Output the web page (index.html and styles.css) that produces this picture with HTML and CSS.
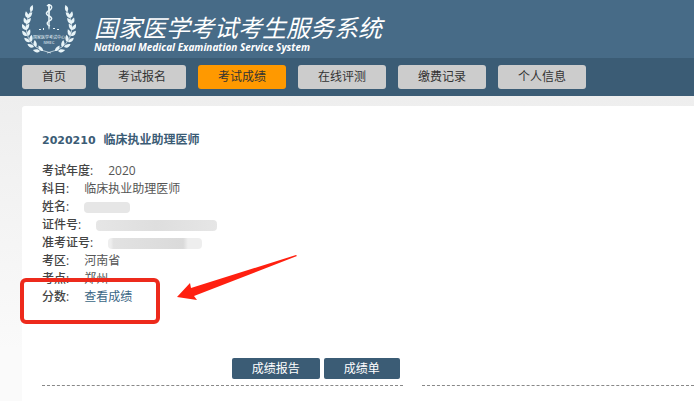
FILE: index.html
```html
<!DOCTYPE html>
<html lang="zh-CN">
<head>
<meta charset="utf-8">
<meta name="viewport" content="width=device-width, initial-scale=1">
<title>国家医学考试考生服务系统</title>
<link rel="stylesheet" href="styles.css">
</head>
<body>
<header class="header">
  <svg class="logo" viewBox="0 0 54 54" aria-hidden="true">
    <defs>
      <path id="leaf" d="M0 0C-3.500-1-4-3-3-6.500C-.4-4.600 1-2.500 0 0Z"/>
      <g id="branch">
        <path d="M9 10C2 22 2 37 14 46Q20 50 29 52" fill="none" stroke="currentColor" stroke-width=".7"/>
        <use href="#leaf" transform="translate(9 11) rotate(38)"/>
        <use href="#leaf" transform="translate(6 17) rotate(8)"/>
        <use href="#leaf" transform="translate(5 23)"/>
        <use href="#leaf" transform="translate(4 29) rotate(-8)"/>
        <use href="#leaf" transform="translate(5 35) rotate(-18)"/>
        <use href="#leaf" transform="translate(8 41) rotate(-30)"/>
        <use href="#leaf" transform="translate(12 46) rotate(-42)"/>
        <use href="#leaf" transform="translate(18 50) rotate(-58)"/>
        <use href="#leaf" transform="translate(6 17) rotate(62)"/>
        <use href="#leaf" transform="translate(5 23) rotate(58)"/>
        <use href="#leaf" transform="translate(4 29) rotate(52)"/>
        <use href="#leaf" transform="translate(6 35) rotate(42)"/>
        <use href="#leaf" transform="translate(9 41) rotate(30)"/>
        <use href="#leaf" transform="translate(14 46) rotate(15)"/>
        <use href="#leaf" transform="translate(21 50) rotate(-15)"/>
      </g>
    </defs>
    <g fill="currentColor">
      <use href="#branch"/>
      <use href="#branch" transform="translate(54 0) scale(-1 1)"/>
      <path d="M26 3h2l-.4 24-.6 2-.6-2Z"/>
      <path d="M25 5C28 2 32 6 28 9C24 11 23 13 27 15C31 17 30 19 27 20C24 22 25 24 28 25" fill="none" stroke="currentColor" stroke-width="1.500"/>
      <text x="27" y="38" class="logo-text">国家医学考试中心</text>
      <text x="27" y="43" class="logo-text">NMEC</text>
      <path d="M17 28h2v1h-2zM21 27h1v2h-1zM31 27h2v1h-2zM35 28h2v1h-2z"/>
    </g>
  </svg>
  <div class="brand">
    <h1 class="title">国家医学考试考生服务系统</h1>
    <p class="subtitle">National Medical Examination Service System</p>
  </div>
</header>
<nav class="nav">
  <a href="#">首页</a>
  <a href="#">考试报名</a>
  <a href="#" class="active" aria-current="page">考试成绩</a>
  <a href="#">在线评测</a>
  <a href="#">缴费记录</a>
  <a href="#">个人信息</a>
</nav>
<main class="panel">
  <section class="result">
    <h2 class="exam"><span class="code">2020210</span>临床执业助理医师</h2>
    <dl class="details">
      <div class="row"><dt>考试年度:</dt><dd>2020</dd></div>
      <div class="row"><dt>科目:</dt><dd>临床执业助理医师</dd></div>
      <div class="row"><dt>姓名:</dt><dd><span class="mask mask-name"></span></dd></div>
      <div class="row"><dt>证件号:</dt><dd><span class="mask mask-id"></span></dd></div>
      <div class="row"><dt>准考证号:</dt><dd><span class="mask mask-ticket"></span></dd></div>
      <div class="row"><dt>考区:</dt><dd>河南省</dd></div>
      <div class="row"><dt>考点:</dt><dd>郑州</dd></div>
      <div class="row score"><dt>分数:</dt><dd><a href="#">查看成绩</a></dd>
        <svg class="callout" viewBox="0 0 280 74" aria-hidden="true">
          <rect x="4" y="28" width="136" height="42" rx="4" fill="none" stroke="#ed2a1c" stroke-width="4"/>
          <path d="M159 45L172 31L173 36L278 3L279 4L176 44L179 48Z" fill="#ff2010"/>
        </svg>
      </div>
    </dl>
    <div class="actions">
      <button type="button">成绩报告</button>
      <button type="button">成绩单</button>
    </div>
  </section>
  <section class="result"></section>
</main>
</body>
</html>
```
FILE: styles.css
```css
* { box-sizing: border-box; }

body {
  margin: 0;
  min-height: 100vh;
  display: flex;
  flex-direction: column;
  background: linear-gradient(#eeeeee 96px, #fafafa 350px);
  color: #555;
  font: 12px/18px "Open Sans", "Noto Sans CJK SC", sans-serif;
}

.header {
  display: flex;
  align-items: flex-start;
  gap: 18px;
  height: 58px;
  padding: 1px 22px 0;
  background: #476b87;
  color: #fff;
}

.logo {
  flex: none;
  width: 54px;
  height: 54px;
  color: #e8f4f8;
}

.logo-text {
  font: 4px "Noto Sans CJK SC", sans-serif;
  text-anchor: middle;
}

.brand { padding-top: 12px; }

.title {
  margin: 0;
  font: italic 400 24px/28px "Noto Sans CJK SC", sans-serif;
  white-space: nowrap;
}

.subtitle {
  margin: 0;
  font: italic 700 10px/12px "Noto Sans", sans-serif;
  white-space: nowrap;
}

.nav {
  display: flex;
  gap: 12px;
  padding: 7px 22px;
  background: #3b5c75;
}

.nav a {
  padding: 0 20px;
  border-radius: 3px;
  background: #ccc;
  color: #333;
  line-height: 24px;
  text-decoration: none;
  white-space: nowrap;
}

.nav .active { background: #ff9900; }

.panel {
  flex: 1;
  display: grid;
  grid-template-columns: 57fr 43fr;
  align-items: stretch;
  align-content: start;
  gap: 19px;
  margin: 10px 0 0 22px;
  padding: 25px 0 0 20px;
  border-top-left-radius: 3px;
  background: #fff;
}

.result {
  padding-bottom: 6px;
  border-bottom: 1px dashed #888;
}

.exam {
  margin: 0 0 12px;
  color: #3b5c75;
  font-size: 12px;
  line-height: 18px;
}

.code {
  margin-right: 8px;
  font: bold 11px/18px "DejaVu Sans", sans-serif;
}

.details { margin: 0; }

.row {
  display: flex;
  gap: 15px;
}

dt { font-weight: 500; color: #444; }

dd { margin: 0; }

.mask {
  display: block;
  height: 11px;
  margin-top: 4px;
  border-radius: 4px;
  background: #e6e6e6;
}

.mask-name { width: 46px; }

.mask-id { width: 121px; background: linear-gradient(90deg, #e6e6e6, #dedede 50%, #e6e6e6); }

.mask-ticket { width: 94px; background: linear-gradient(90deg, #eee 3%, #e2e2e2 6%, #dadada 80%, #eee 85%); }

.score { position: relative; }

.score a { color: #3b6785; text-decoration: none; }

.callout {
  position: absolute;
  top: -36px;
  left: -24px;
  width: 280px;
  height: 74px;
  pointer-events: none;
}

.actions {
  display: flex;
  justify-content: flex-end;
  gap: 4px;
  margin-top: 52px;
  padding-right: 3px;
}

.actions button {
  padding: 0 20px;
  border: 0;
  border-radius: 2px;
  background: #3b5c75;
  color: #fff;
  font: inherit;
  line-height: 21px;
}
```
